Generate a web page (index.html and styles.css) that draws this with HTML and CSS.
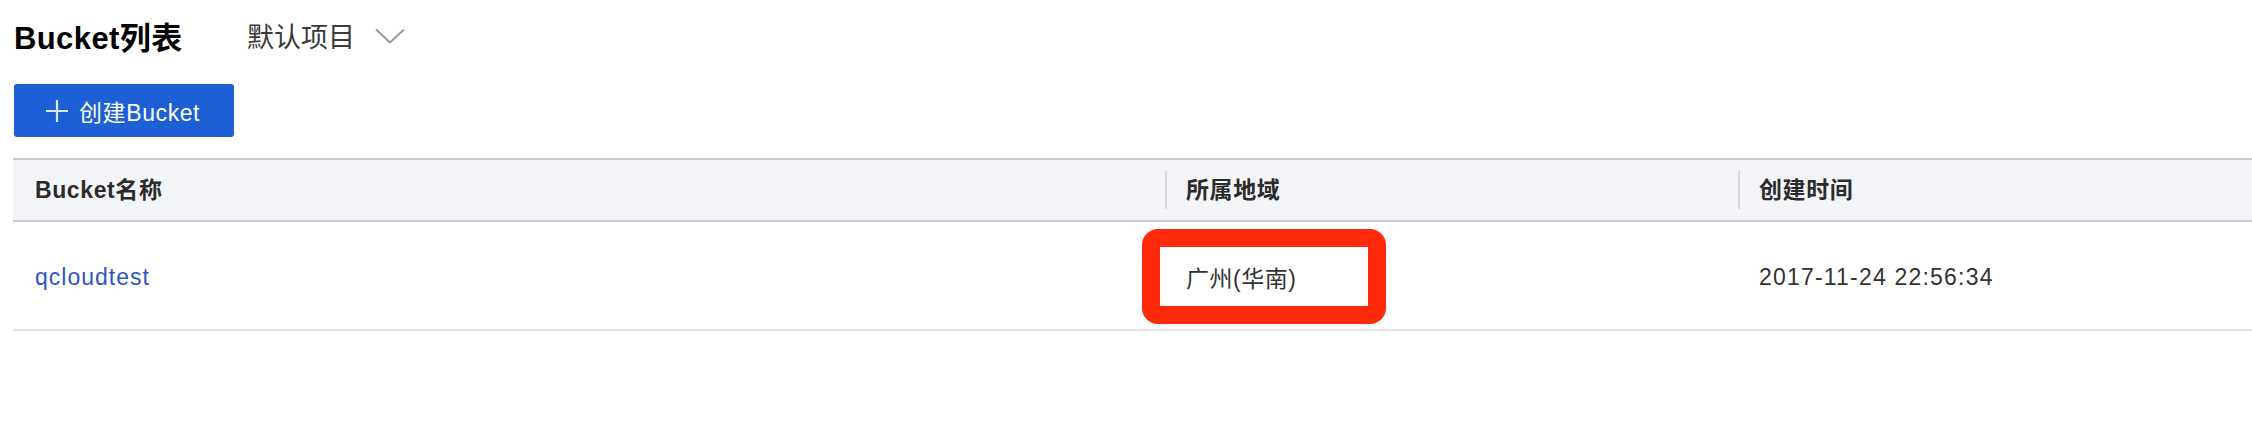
FILE: index.html
```html
<!DOCTYPE html>
<html lang="zh-CN">
<head>
    <meta charset="UTF-8">
    <meta name="viewport" content="width=device-width, initial-scale=1.0">
    <title>Bucket列表</title>
    <link rel="stylesheet" href="styles.css">
</head>
<body>
    <div class="page">
        <div class="page-head">
            <h2>Bucket列表</h2>
            <div class="project-select">
                <span>默认项目</span>
                <svg class="chevron" width="30" height="16" viewBox="0 0 30 16">
                    <polyline points="1,1.5 15,14.5 29,1.5" fill="none" stroke="#9a9a9a" stroke-width="2"/>
                </svg>
            </div>
        </div>
        <div class="toolbar">
            <button class="btn-create">
                <svg width="22" height="22" viewBox="0 0 22 22">
                    <path d="M11 0V22M0 11H22" stroke="#dfe8fb" stroke-width="2.2" fill="none"/>
                </svg>
                <span>创建Bucket</span>
            </button>
        </div>
        <table class="bucket-table">
            <colgroup>
                <col class="col-name">
                <col class="col-region">
                <col>
            </colgroup>
            <thead>
                <tr>
                    <th><div class="th-inner first">Bucket名称</div></th>
                    <th><div class="th-inner">所属地域</div></th>
                    <th><div class="th-inner">创建时间</div></th>
                </tr>
            </thead>
            <tbody>
                <tr>
                    <td class="first"><a href="#">qcloudtest</a></td>
                    <td><span class="mark">广州(华南)</span></td>
                    <td class="time">2017-11-24 22:56:34</td>
                </tr>
            </tbody>
        </table>
    </div>
</body>
</html>
```

FILE: styles.css
```css
body {
    margin: 0;
    font-family: "Liberation Sans", "Noto Sans CJK SC", sans-serif;
    background-color: #fff;
    color: #333;
}
.page {
    padding-left: 14px;
}
.page-head {
    display: flex;
    align-items: center;
    height: 70px;
}
.page-head h2 {
    margin: 0;
    font-size: 31px;
    font-weight: bold;
    letter-spacing: 0.4px;
    color: #000;
    width: 233px;
}
.project-select {
    display: flex;
    align-items: center;
    font-size: 27px;
    color: #3a3a3a;
}
.project-select .chevron {
    margin-left: 20px;
    margin-top: 2px;
}
.toolbar {
    margin-top: 14px;
}
.btn-create {
    display: flex;
    align-items: center;
    width: 220px;
    height: 53px;
    padding: 0 0 0 32px;
    border: none;
    border-radius: 3px;
    background-color: #1d5fd4;
    color: #fff;
    font-family: inherit;
    font-size: 23px;
    letter-spacing: 0.6px;
    cursor: pointer;
}
.btn-create svg {
    margin-right: 11px;
}
.bucket-table {
    margin-top: 21px;
    margin-left: -1px;
    width: calc(100% + 1px);
    border-collapse: collapse;
    font-size: 23px;
}
.col-name {
    width: 1152px;
}
.col-region {
    width: 573px;
}
.bucket-table th {
    height: 60px;
    padding: 0;
    background-color: #f3f4f8;
    border-top: 2px solid #c9cacd;
    border-bottom: 2px solid #c9cacd;
    text-align: left;
    font-weight: bold;
    letter-spacing: 0.6px;
    color: #2b2b2b;
}
.th-inner {
    line-height: 38px;
    border-left: 2px solid #d9d9d9;
    padding-left: 19px;
}
.th-inner.first {
    border-left: none;
    padding-left: 22px;
}
.bucket-table td {
    height: 103px;
    padding: 4px 0 0 21px;
    border-bottom: 2px solid #e3e3e5;
    color: #333;
    letter-spacing: 0.5px;
}
.bucket-table td.first {
    padding-left: 22px;
}
.bucket-table td.time {
    letter-spacing: 1.2px;
}
.bucket-table a {
    color: #2c56c4;
    text-decoration: none;
    letter-spacing: 1px;
}
.mark {
    display: inline-flex;
    align-items: center;
    box-sizing: border-box;
    width: 244px;
    height: 95px;
    margin: -2px 0 0 -44px;
    padding-left: 26px;
    border: 18px solid #ff2a0c;
    border-radius: 16px;
    vertical-align: middle;
}
```
